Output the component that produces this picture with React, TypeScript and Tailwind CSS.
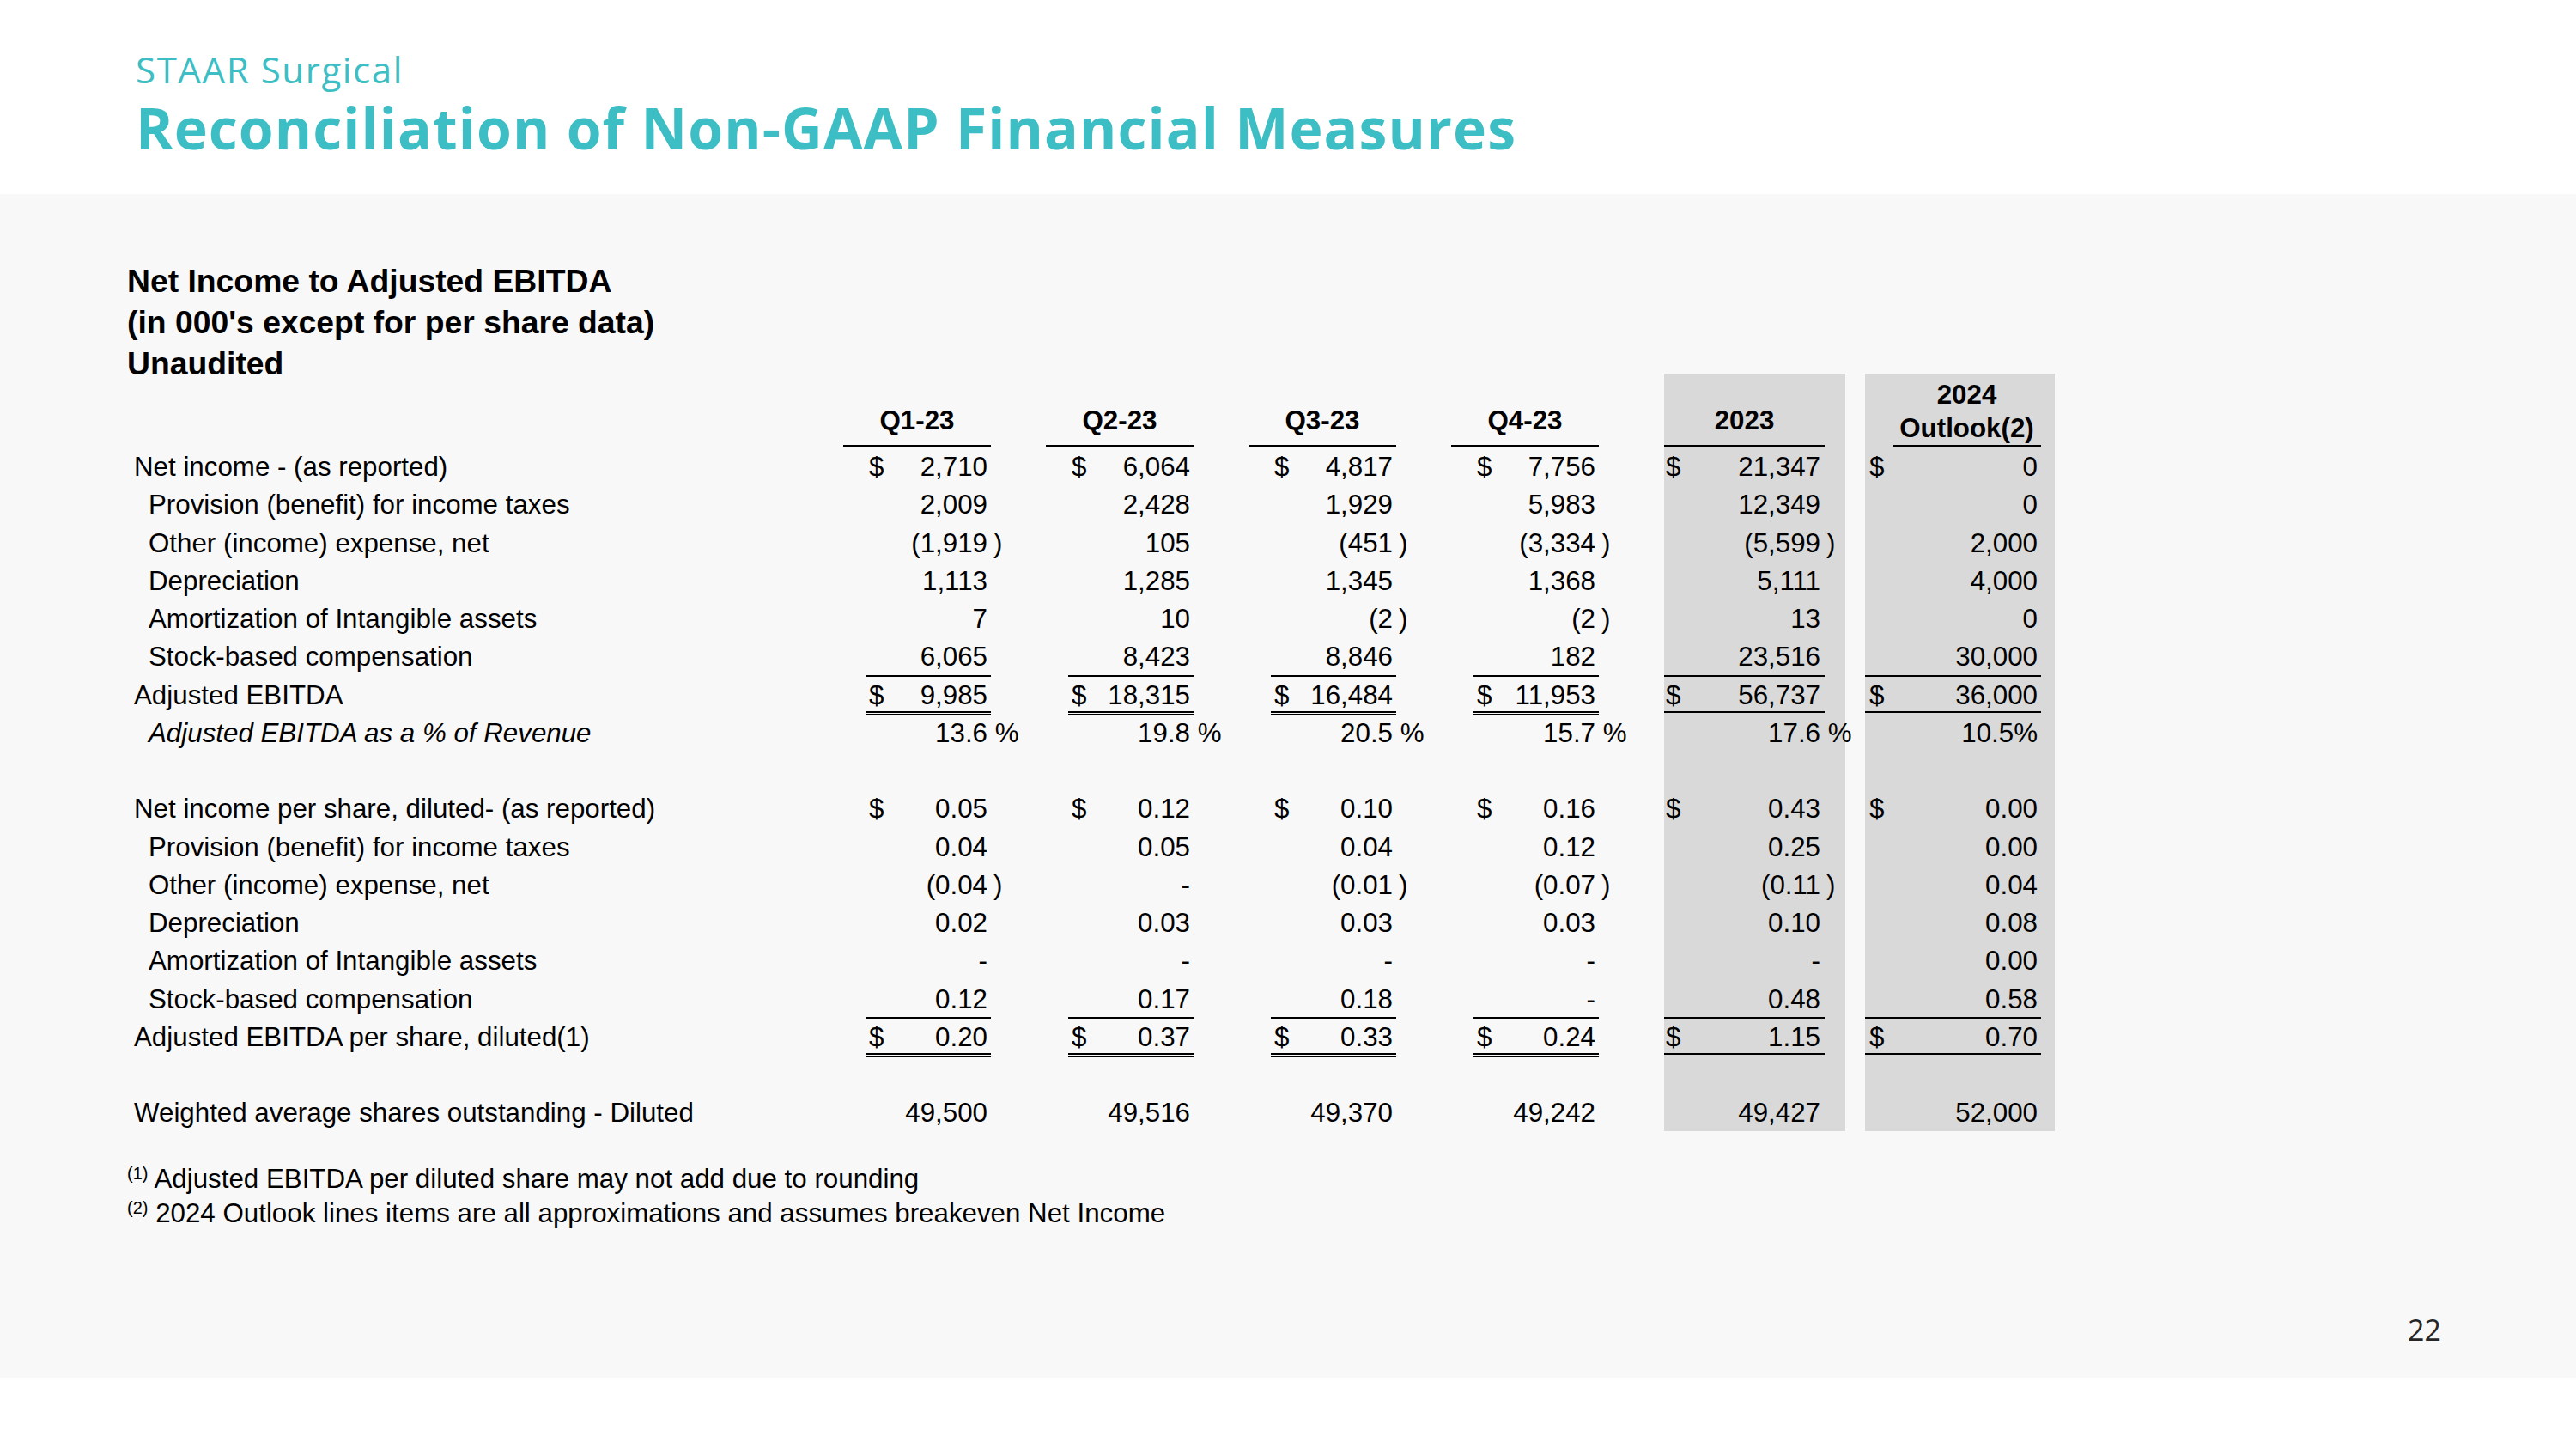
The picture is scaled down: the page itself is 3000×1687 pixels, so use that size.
import React from "react";

type Row = {
  label: string;
  indent?: boolean;
  italic?: boolean;
  dollar?: boolean;
  sum?: boolean;
  blank?: boolean;
  values?: string[];
};

const rows: Row[] = [
  { label: "Net income - (as reported)", dollar: true, values: ["2,710", "6,064", "4,817", "7,756", "21,347", "0"] },
  { label: "Provision (benefit) for income taxes", indent: true, values: ["2,009", "2,428", "1,929", "5,983", "12,349", "0"] },
  { label: "Other (income) expense, net", indent: true, values: ["(1,919)", "105", "(451)", "(3,334)", "(5,599)", "2,000"] },
  { label: "Depreciation", indent: true, values: ["1,113", "1,285", "1,345", "1,368", "5,111", "4,000"] },
  { label: "Amortization of Intangible assets", indent: true, values: ["7", "10", "(2)", "(2)", "13", "0"] },
  { label: "Stock-based compensation", indent: true, values: ["6,065", "8,423", "8,846", "182", "23,516", "30,000"] },
  { label: "Adjusted EBITDA", dollar: true, sum: true, values: ["9,985", "18,315", "16,484", "11,953", "56,737", "36,000"] },
  { label: "Adjusted EBITDA as a % of Revenue", indent: true, italic: true, values: ["13.6%", "19.8%", "20.5%", "15.7%", "17.6%", "10.5%!"] },
  { label: "", blank: true },
  { label: "Net income per share, diluted- (as reported)", dollar: true, values: ["0.05", "0.12", "0.10", "0.16", "0.43", "0.00"] },
  { label: "Provision (benefit) for income taxes", indent: true, values: ["0.04", "0.05", "0.04", "0.12", "0.25", "0.00"] },
  { label: "Other (income) expense, net", indent: true, values: ["(0.04)", "-", "(0.01)", "(0.07)", "(0.11)", "0.04"] },
  { label: "Depreciation", indent: true, values: ["0.02", "0.03", "0.03", "0.03", "0.10", "0.08"] },
  { label: "Amortization of Intangible assets", indent: true, values: ["-", "-", "-", "-", "-", "0.00"] },
  { label: "Stock-based compensation", indent: true, values: ["0.12", "0.17", "0.18", "-", "0.48", "0.58"] },
  { label: "Adjusted EBITDA per share, diluted(1)", dollar: true, sum: true, values: ["0.20", "0.37", "0.33", "0.24", "1.15", "0.70"] },
  { label: "", blank: true },
  { label: "Weighted average shares outstanding - Diluted", values: ["49,500", "49,516", "49,370", "49,242", "49,427", "52,000"] },
];

function NumText({ v }: { v: string }) {
  if (v.endsWith("!")) {
    return <span className="whitespace-nowrap">{v.slice(0, -1)}</span>;
  }
  if (v.startsWith("(") && v.endsWith(")")) {
    return (
      <span className="whitespace-nowrap">
        {v.slice(0, -1)}
        <span className="inline-block w-0 whitespace-nowrap">
          <span className="ml-[7px]">)</span>
        </span>
      </span>
    );
  }
  if (v.endsWith("%")) {
    return (
      <span className="whitespace-nowrap">
        {v.slice(0, -1)}
        <span className="inline-block w-0 whitespace-nowrap">{"\u00a0%"}</span>
      </span>
    );
  }
  return <span className="whitespace-nowrap">{v}</span>;
}

function Inner({
  v,
  dollar,
  sum,
  widthCls,
  padCls,
}: {
  v: string;
  dollar?: boolean;
  sum?: boolean;
  widthCls: string;
  padCls: string;
}) {
  return (
    <div className={`flex h-full flex-col ${widthCls}`}>
      {sum && <div className="h-[2px] shrink-0 bg-black" />}
      <div className={`flex flex-1 items-center justify-between pt-[4px] ${padCls}`}>
        <span>{dollar ? "$" : ""}</span>
        <NumText v={v} />
      </div>
      {sum && <div className="-mb-[3px] h-[5px] shrink-0 border-y-2 border-black" />}
    </div>
  );
}

function DataRow({ row }: { row: Row }) {
  const vals = row.values ?? ["", "", "", "", "", ""];
  return (
    <div className="flex h-[44.25px] leading-[36px]">
      <div
        className={`flex w-[834px] items-center pt-[4px] ${row.indent ? "pl-[25px]" : "pl-[8px]"} ${
          row.italic ? "italic" : ""
        }`}
      >
        {row.label}
      </div>
      {[0, 1, 2, 3].map((i) => (
        <div key={i} className={`flex w-[172px] ${i > 0 ? "ml-[64px]" : ""}`}>
          {!row.blank && (
            <div className="ml-[26px]">
              <Inner v={vals[i]} dollar={row.dollar} sum={row.sum} widthCls="w-[146px]" padCls="pl-[4px] pr-[4px]" />
            </div>
          )}
        </div>
      ))}
      <div className="ml-[76px] flex w-[211px] bg-[#d9d9d9]">
        {!row.blank && (
          <Inner v={vals[4]} dollar={row.dollar} sum={row.sum} widthCls="w-[187px]" padCls="pl-[2px] pr-[5px]" />
        )}
      </div>
      <div className="ml-[23px] flex w-[221px] bg-[#d9d9d9]">
        {!row.blank && (
          <Inner v={vals[5]} dollar={row.dollar} sum={row.sum} widthCls="w-[205px]" padCls="pl-[5px] pr-[4px]" />
        )}
      </div>
    </div>
  );
}

function HeaderRow() {
  return (
    <div className="flex h-[85px] items-end font-bold leading-[36px]">
      <div className="w-[834px]" />
      {["Q1-23", "Q2-23", "Q3-23", "Q4-23"].map((q, i) => (
        <div
          key={q}
          className={`w-[172px] border-b-2 border-black pb-[10px] text-center ${i > 0 ? "ml-[64px]" : ""}`}
        >
          {q}
        </div>
      ))}
      <div className="ml-[76px] flex h-full w-[211px] items-end bg-[#d9d9d9]">
        <div className="w-[187px] border-b-2 border-black pb-[10px] text-center">2023</div>
      </div>
      <div className="ml-[23px] flex h-full w-[221px] items-end bg-[#d9d9d9]">
        <div className="ml-[32px] w-[173px] border-b-2 border-black pb-[0px] text-center leading-[39px]">
          <div>2024</div>
          <div>Outlook(2)</div>
        </div>
      </div>
    </div>
  );
}

export default function App() {
  return (
    <div className="w-[3000px] bg-white">
      <div className="flex h-[226px] flex-col pl-[158px] pt-[60px] font-['Open_Sans',sans-serif] text-[#3dbec4]">
        <div className="text-[42px] leading-[42px] tracking-[1.6px]">STAAR Surgical</div>
        <div className="mt-[13px] text-[66px] font-bold leading-[66px] tracking-[1.1px]">
          Reconciliation of Non-GAAP Financial Measures
        </div>
      </div>
      <div className="flex h-[1378px] flex-col bg-[#f8f8f8] font-['Liberation_Sans',Arial,sans-serif] text-[31.3px] text-black">
        <div className="pl-[148px] pt-[77px]">
          <div className="-mb-[12px] text-[37.3px] font-bold leading-[48px]">
            <div>Net Income to Adjusted EBITDA</div>
            <div>(in 000's except for per share data)</div>
            <div>Unaudited</div>
          </div>
          <HeaderRow />
          {rows.map((r, i) => (
            <DataRow key={i} row={r} />
          ))}
          <div className="mt-[36px] leading-[40px]">
            <div>
              <sup className="text-[20px]">(1)</sup> Adjusted EBITDA per diluted share may not add due to rounding
            </div>
            <div>
              <sup className="text-[20px]">(2)</sup> 2024 Outlook lines items are all approximations and assumes breakeven Net Income
            </div>
          </div>
        </div>
        <div className="mt-auto flex justify-end pb-[39px] pr-[157px] font-['Open_Sans',sans-serif] text-[34px] leading-[34px] text-[#262626]">
          22
        </div>
      </div>
    </div>
  );
}
